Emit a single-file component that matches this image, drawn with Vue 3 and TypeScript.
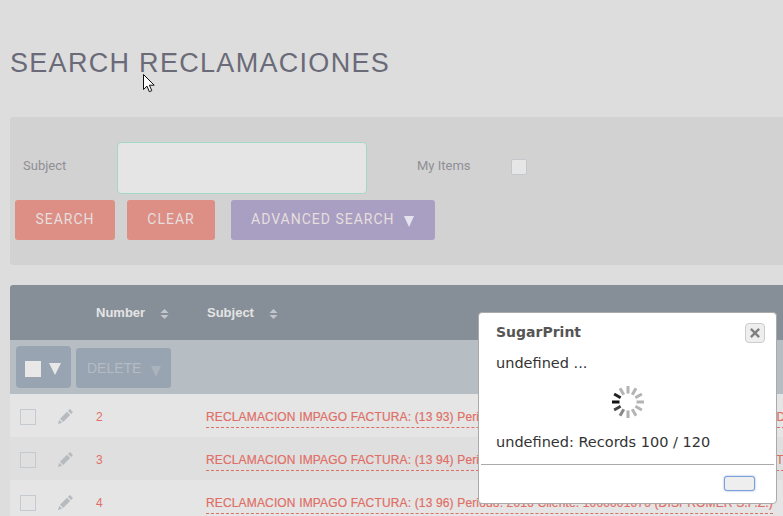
<script setup lang="ts">
const rows = [
  { n: 2, code: '13 93', tail: 'Periodo: 2016 Cliente: 1000001070 (DISPROMER S.P.Z.) D' },
  { n: 3, code: '13 94', tail: 'Periodo: 2016 Cliente: 1000001070 (DISPROMER S.P.Z.) T' },
  { n: 4, code: '13 96', tail: 'Periodo: 2016 Cliente: 1000001070 (DISPROMER S.P.Z.)' },
]
const spokes = [
  { a: 0, c: '#b4b4b4' }, { a: 30, c: '#b4b4b4' }, { a: 60, c: '#b4b4b4' }, { a: 90, c: '#b4b4b4' },
  { a: 120, c: '#b4b4b4' }, { a: 150, c: '#b4b4b4' }, { a: 180, c: '#b0b0b0' }, { a: 210, c: '#888' },
  { a: 240, c: '#444' }, { a: 270, c: '#111' }, { a: 300, c: '#222' }, { a: 330, c: '#b4b4b4' },
]
</script>

<template>
  <div class="page">
    <h1 class="title">SEARCH RECLAMACIONES</h1>

    <section class="search">
      <div class="fields">
        <label class="lbl">Subject</label>
        <div class="input"></div>
        <label class="lbl mine">My Items</label>
        <span class="check"></span>
      </div>
      <div class="actions">
        <button class="btn red b1">SEARCH</button>
        <button class="btn red b2">CLEAR</button>
        <button class="btn purple">ADVANCED SEARCH<span class="tri"></span></button>
      </div>
    </section>

    <section class="table">
      <div class="thead">
        <span class="th num">Number<svg class="sort" viewBox="0 0 9 10"><path d="M4.5 0 8.5 4H.5ZM.5 6h8l-4 4Z" /></svg></span>
        <span class="th">Subject<svg class="sort" viewBox="0 0 9 10"><path d="M4.5 0 8.5 4H.5ZM.5 6h8l-4 4Z" /></svg></span>
      </div>
      <div class="tools">
        <div class="selbox"><span class="sq"></span><span class="wtri"></span></div>
        <div class="del">DELETE<span class="dtri"></span></div>
      </div>
      <div v-for="r in rows" :key="r.n" class="row">
        <span class="rc"></span>
        <svg class="pen" viewBox="0 0 16 16"><path d="M12 .6c.4-.4 1-.4 1.400 0l2 2c.4.4.4 1 0 1.400L14 5.400 10.600 2ZM9.600 3l3.400 3.400-7.500 7.500-3.400-3.400ZM1.300 11.500l3.200 3.200-4.500 1.300Z" /></svg>
        <span class="nr">{{ r.n }}</span>
        <a class="subj">RECLAMACION IMPAGO FACTURA: ({{ r.code }}) {{ r.tail }}</a>
      </div>
    </section>

    <div class="dialog">
      <div class="dhead">
        <span class="dtitle">SugarPrint</span>
        <span class="close"><svg viewBox="0 0 10 10"><path d="M1.700 0 5 3.300 8.300 0 10 1.700 6.700 5 10 8.300 8.300 10 5 6.700 1.700 10 0 8.300 3.300 5 0 1.700Z" /></svg></span>
      </div>
      <p class="dtxt first">undefined ...</p>
      <svg class="spin" viewBox="0 0 34 34">
        <rect v-for="s in spokes" :key="s.a" x="15.500" y="1" width="3" height="7.500" :fill="s.c" :transform="`rotate(${s.a} 17 17)`" />
      </svg>
      <p class="dtxt rec">undefined: Records 100 / 120</p>
      <div class="dfoot"><span class="okbtn"></span></div>
    </div>

    <svg class="cursor" viewBox="0 0 12 19"><path d="M.5.5v15l3.500-3.400 2.300 5.600 2.500-1-2.400-5.500h4.800Z" fill="#fff" stroke="#111" stroke-width="1" /></svg>
  </div>
</template>

<style>
html, body { margin: 0; background: #ddd; overflow: hidden; }
</style>

<style scoped>
.page {
  position: relative;
  width: 783px;
  height: 516px;
  overflow: hidden;
  background: #ddd;
  font-family: "Liberation Sans", Arial, sans-serif;
}
.title {
  margin: 0;
  padding: 47px 0 0 10px;
  height: 117px;
  box-sizing: border-box;
  font-size: 27px;
  line-height: 32px;
  font-weight: 400;
  letter-spacing: 1.300px;
  color: #6a6a78;
  white-space: nowrap;
}
.search {
  margin-left: 10px;
  height: 148px;
  box-sizing: border-box;
  padding: 25px 0 0 5px;
  background: #d2d2d2;
  border-radius: 3px 0 0 3px;
}
.fields { display: flex; align-items: center; height: 52px; }
.lbl { font-family: Roboto, sans-serif; font-size: 13px; color: #8f8f96; margin-bottom: 6px; }
.fields .lbl:first-child { margin-left: 8px; width: 94px; }
.input {
  width: 248px;
  height: 50px;
  background: #e5e5e5;
  border: 1px solid #a5d8c4;
  border-radius: 4px;
}
.mine { margin-left: 50px; width: 94px; }
.check {
  width: 14px;
  height: 14px;
  margin-bottom: 2px;
  background: #e6e6e6;
  border: 1px solid #c4c8cc;
  border-radius: 2px;
}
.actions { display: flex; margin-top: 6px; }
.btn {
  height: 40px;
  border: 0;
  border-radius: 3px;
  padding: 0 0 2px;
  font-family: Roboto, sans-serif;
  font-size: 14px;
  letter-spacing: 1px;
  color: #e6dede;
}
.red { background: #dd8e85; }
.b1 { width: 100px; margin-right: 12px; }
.b2 { width: 88px; margin-right: 16px; }
.purple {
  display: flex;
  align-items: center;
  width: 204px;
  padding-left: 20px;
  background: #a99fc2;
}
.tri {
  width: 0;
  height: 0;
  margin-left: 9px;
  margin-top: 5px;
  border-left: 5.500px solid transparent;
  border-right: 5.500px solid transparent;
  border-top: 11px solid #e6e3ee;
}
.table { margin: 20px 0 0 10px; }
.thead {
  display: flex;
  align-items: center;
  height: 55px;
  padding-left: 86px;
  background: #868f98;
  border-radius: 3px 0 0 0;
}
.th {
  display: flex;
  align-items: center;
  font-size: 13px;
  font-weight: 700;
  color: #e4e4e4;
}
.num { width: 111px; }
.sort { width: 9px; height: 10px; margin-left: 15px; margin-top: 2px; fill: #c3c7cc; }
.tools {
  display: flex;
  align-items: center;
  gap: 5px;
  height: 54px;
  padding-left: 6px;
  background: #b6bdc3;
}
.selbox {
  display: flex;
  align-items: center;
  width: 55px;
  height: 42px;
  padding-left: 9px;
  box-sizing: border-box;
  background: #98a4b1;
  border-radius: 4px;
}
.sq { width: 16px; height: 16px; margin-top: 4px; background: #e8e8e8; }
.wtri {
  width: 0;
  height: 0;
  margin-left: 8px;
  margin-top: 4px;
  border-left: 6px solid transparent;
  border-right: 6px solid transparent;
  border-top: 12px solid #e8e8e8;
}
.del {
  display: flex;
  align-items: center;
  width: 95px;
  height: 40px;
  margin-top: 2px;
  padding-left: 11px;
  box-sizing: border-box;
  background: #98a4b1;
  border-radius: 3px;
  font-size: 14px;
  color: #b4bbc3;
}
.dtri {
  width: 0;
  height: 0;
  margin-left: 10px;
  margin-top: 6px;
  border-left: 5.500px solid transparent;
  border-right: 5.500px solid transparent;
  border-top: 11px solid #aab2bb;
}
.row {
  display: flex;
  align-items: center;
  height: 43px;
  padding-left: 10px;
  background: #e5e5e5;
  white-space: nowrap;
}
.row:nth-child(4) { background: #dfdfdf; }
.rc {
  flex: none;
  width: 14px;
  height: 14px;
  margin-top: 2px;
  border: 1px solid #c5cad0;
}
.pen { flex: none; width: 15px; height: 15px; margin: 2px 0 0 22px; fill: #b7bbbf; }
.nr { flex: none; width: 110px; margin: 2px 0 0 23px; font-size: 12px; color: #df6f66; }
.subj {
  flex: none;
  margin-top: 5px;
  padding-bottom: 2px;
  font-size: 12px;
  line-height: 16px;
  letter-spacing: 0.150px;
  color: #df6f66;
  border-bottom: 1px dashed #df6f66;
  -webkit-text-stroke: 0.2px #df6f66;
}
.dialog {
  position: absolute;
  left: 478px;
  top: 312px;
  width: 297px;
  height: 190px;
  background: #fff;
  border: 1px solid #aaa;
  border-radius: 4px;
  font-family: "DejaVu Sans", Verdana, sans-serif;
  color: #333;
}
.dhead { display: flex; justify-content: space-between; align-items: center; height: 37px; padding: 0 11px 0 17px; }
.dtitle { font-size: 14px; font-weight: 700; color: #555; }
.close {
  display: flex;
  align-items: center;
  justify-content: center;
  width: 18px;
  height: 18px;
  margin-top: 2px;
  background: #eee;
  border: 1px solid #ccc;
  border-radius: 4px;
}
.close svg { width: 10px; height: 10px; fill: #808080; }
.dtxt { margin: 0; padding-left: 17px; font-size: 14.500px; line-height: 16px; }
.first { margin-top: 5px; }
.spin { display: block; width: 34px; height: 34px; margin: 14px 0 0 132px; }
.rec { margin-top: 15px; }
.dfoot {
  margin: 14px 2px 0;
  padding-top: 11px;
  border-top: 1px solid #aaa;
  display: flex;
  justify-content: flex-end;
}
.okbtn {
  width: 29px;
  height: 13px;
  margin-right: 19px;
  background: #eee;
  border: 1px solid #7b9fd9;
  box-shadow: 0 0 2px #7b9fd9;
  border-radius: 3px;
}
.cursor { position: absolute; left: 143px; top: 74px; width: 12px; height: 19px; }
</style>
